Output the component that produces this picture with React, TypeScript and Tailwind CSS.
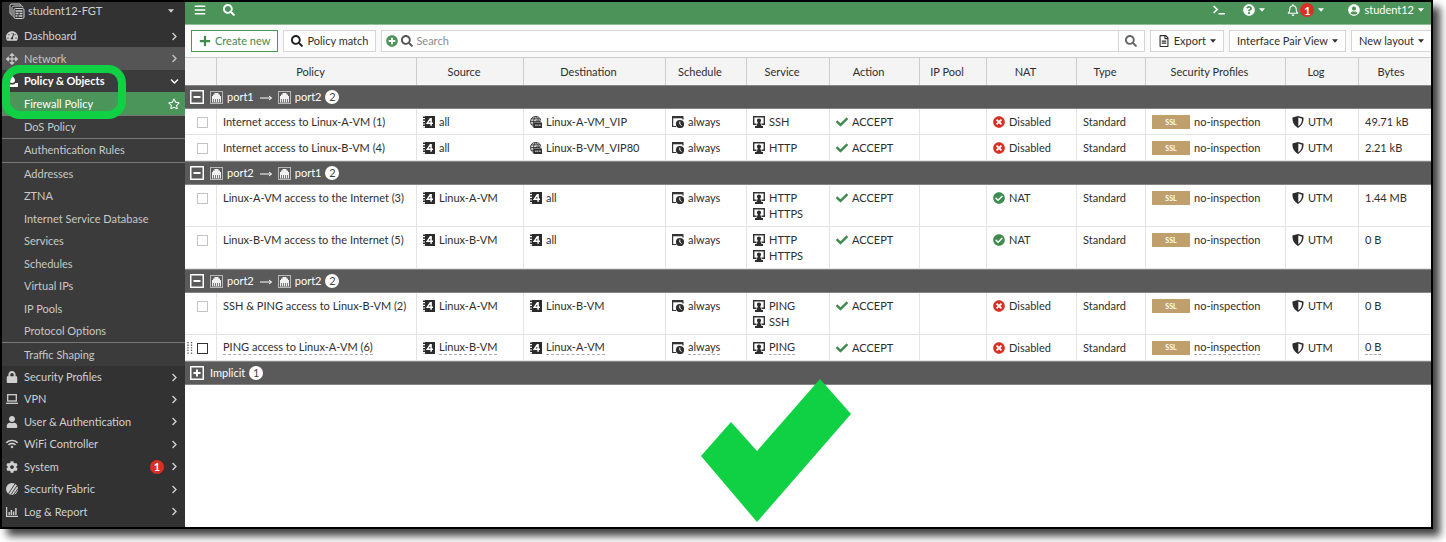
import { useState, type ReactNode } from "react";
import {
  FaArrowsAlt,
  FaBars,
  FaCheck,
  FaCheckCircle,
  FaChevronDown,
  FaChevronRight,
  FaCog,
  FaLock,
  FaPlus,
  FaPlusCircle,
  FaQuestionCircle,
  FaRegBell,
  FaRegFileAlt,
  FaRegStar,
  FaSearch,
  FaTachometerAlt,
  FaTimesCircle,
  FaUser,
  FaUserCircle,
  FaWifi,
} from "react-icons/fa";

const svgBase = "h-3 w-3 shrink-0";

function Caret() {
  return (
    <svg viewBox="0 0 6 4" className="h-1 w-[6px] shrink-0" fill="currentColor">
      <path d="M0 .3h6L3 3.700z" />
    </svg>
  );
}

function DeviceIcon() {
  return (
    <svg viewBox="0 0 16 16" className="h-4 w-4 shrink-0" fill="none" stroke="currentColor" strokeWidth="1">
      <path d="M2.500 11.500l-1.500-1V2.200L2.200 1H11l1 1.500" />
      <path d="M4 13.500l-1-1V4.500L4.500 3H13l1 1.500" />
      <rect x="5" y="5.500" width="10" height="10" rx="1.500" />
      <path d="M6.500 8h7M6.500 10.500h3M10.500 10.500h3M6.500 13h2M9.500 13h4" strokeWidth="1.400" />
    </svg>
  );
}

function PolicyIcon() {
  return (
    <svg viewBox="0 0 12 12" className={svgBase} fill="currentColor">
      <path d="M6 0c.5 2 3 3 3 5.200C9 7 7.800 8 6 8S3 7 3 5.200C3 4 4 3.600 4.200 2.500 5 2.600 6 1.500 6 0z" />
      <path d="M0 8h2.500C3.300 9 4.600 9.500 6 9.500S8.700 9 9.500 8H12v4H0z" />
    </svg>
  );
}

function LaptopIcon() {
  return (
    <svg viewBox="0 0 12 12" className={svgBase} fill="none" stroke="currentColor" strokeWidth="1.300">
      <rect x="1.700" y="1.700" width="8.600" height="6.300" />
      <path d="M0 10.300h12" />
    </svg>
  );
}

function FabricIcon() {
  return (
    <svg viewBox="0 0 12 12" className={svgBase}>
      <circle cx="6" cy="6" r="6" fill="currentColor" />
      <path d="M2.300 11L9 .8M4.700 12L11 2.700M7.500 12L12 5.500" stroke="#323232" strokeWidth=".9" />
    </svg>
  );
}

function ReportIcon() {
  return (
    <svg viewBox="0 0 12 12" className={svgBase} fill="none" stroke="currentColor" strokeWidth="1.200">
      <path d="M.6 1v9.400H12" />
      <path d="M3.200 9V6M5.400 9V4M7.600 9V5.500M9.900 9V2" strokeWidth="1.400" />
    </svg>
  );
}

function PortIcon() {
  return (
    <svg viewBox="0 0 13 13" className="h-[13px] w-[13px] shrink-0">
      <rect x=".5" y=".5" width="12" height="12" fill="none" stroke="#b8b8b8" />
      <path d="M2 5h1V3.500h1.500V2h4v1.500H10V5h1v6.500H2z" fill="#f0f0f0" />
      <path d="M3.500 8v3.500M5.500 8v3.500M7.500 8v3.500M9.500 8v3.500" stroke="#5b5b5b" strokeWidth=".8" />
    </svg>
  );
}

function AddressIcon() {
  return (
    <svg viewBox="0 0 12 12" className={svgBase}>
      <path d="M2 0h10v12H2z" fill="#2b2b2b" />
      <path d="M1 .5v11" stroke="#2b2b2b" strokeWidth="2" strokeDasharray="1.500 1.200" />
      <path d="M8.100 9.800V2.800H7.300L4.300 7.200H10" fill="none" stroke="#fff" strokeWidth="1.500" />
    </svg>
  );
}

function VipIcon() {
  return (
    <svg viewBox="0 0 12 12" className={svgBase} fill="none" stroke="#3a3a3a" strokeWidth=".9">
      <circle cx="5.700" cy="5.500" r="5.300" fill="#d5d5d5" stroke="none" />
      <path d="M4.500 10.700A5.200 5.200 0 1 1 10.800 4.500M.5 5.500h9M1.200 2.800h9M1 8.300h2M5.500.500C3.500 2.500 3 6 4 10.500M5.500.500c2 1 2.700 2.500 3 4" />
      <rect x="3.500" y="6.500" width="8.500" height="5.500" fill="#2f2f2f" stroke="none" />
      <path d="M6 6.500V5h4v1.500" strokeWidth="1" />
      <path d="M5.300 9.300h1.200M7.300 9.300h1M9.300 9.300h1.200" stroke="#ddd" strokeWidth="1.500" />
    </svg>
  );
}

function ScheduleIcon() {
  return (
    <svg viewBox="0 0 12 12" className={svgBase}>
      <path d="M0 0h11.500v2.300H0z" fill="#333" />
      <path d="M.6 2v8.500H4M11 2v1.500" fill="none" stroke="#333" strokeWidth="1.200" />
      <circle cx="8" cy="8" r="4.100" fill="#2d2d2d" />
      <path d="M7.800 5.500v2.700l1.700 1.300" fill="none" stroke="#fff" strokeWidth="1" />
    </svg>
  );
}

function ServiceIcon() {
  return (
    <svg viewBox="0 0 12 12" className={svgBase}>
      <path d="M3.500 8.300H.700V.700h10.600v7.600H8.500" fill="none" stroke="#333" strokeWidth="1.400" />
      <path d="M6 2.500c1.300 0 2 .8 2 2 0 .9-.4 1.500-.8 1.900L8.500 10H10v2H2v-2h1.500l1.300-3.600C4.400 6 4 5.400 4 4.500c0-1.200.7-2 2-2z" fill="#2d2d2d" />
    </svg>
  );
}

function ShieldIcon() {
  return (
    <svg viewBox="0 0 12 12" className={svgBase}>
      <path d="M6 0l5.500 1.600C11.800 6.500 9.700 10 6 12 2.300 10 .2 6.500.5 1.600z" fill="#2b2b2b" />
      <path d="M6.300 1.600l3.700 1.100C10.100 6 8.700 8.700 6.300 10.300z" fill="#fff" />
    </svg>
  );
}

function TerminalIcon() {
  return (
    <svg viewBox="0 0 12 12" className={svgBase} fill="none" stroke="currentColor" strokeWidth="1.600">
      <path d="M.6 2l3.600 3.500L.6 9M5.500 9.800H12" />
    </svg>
  );
}

function ToggleBox({ open }: { open: boolean }) {
  return (
    <svg viewBox="0 0 14 14" className="h-[14px] w-[14px] shrink-0" fill="none" stroke="#fff">
      <rect x=".75" y=".75" width="12.500" height="12.500" strokeWidth="1.500" />
      <path d={open ? "M3.500 7h7" : "M3.500 7h7M7 3.500v7"} strokeWidth="2" />
    </svg>
  );
}

function ArrowIcon() {
  return (
    <svg viewBox="0 0 16 12" className="h-3 w-4 shrink-0" fill="none" stroke="currentColor">
      <path d="M2 7h11.500M11 5l2.500 2L11 9" />
    </svg>
  );
}

function DragHandle() {
  return (
    <svg viewBox="0 0 6 12" className="absolute left-[2px] top-[7px] h-3 w-[6px]" stroke="#555" strokeWidth="1.300">
      <path d="M1 0v12M4.500 0v12" strokeDasharray="1.300 1.300" />
    </svg>
  );
}

type Item = { label: string; icon?: ReactNode; kind?: "top" | "hover" | "open" | "active" | "sub"; line?: boolean; badge?: string };

const ic = "h-3 w-3 shrink-0";
const nav: Item[] = [
  { label: "Dashboard", icon: <FaTachometerAlt className={ic} />, kind: "top" },
  { label: "Network", icon: <FaArrowsAlt className={ic} />, kind: "hover" },
  { label: "Policy & Objects", icon: <PolicyIcon />, kind: "open" },
  { label: "Firewall Policy", kind: "active", line: true },
  { label: "DoS Policy", kind: "sub", line: true },
  { label: "Authentication Rules", kind: "sub", line: true },
  { label: "Addresses", kind: "sub" },
  { label: "ZTNA", kind: "sub" },
  { label: "Internet Service Database", kind: "sub" },
  { label: "Services", kind: "sub" },
  { label: "Schedules", kind: "sub" },
  { label: "Virtual IPs", kind: "sub" },
  { label: "IP Pools", kind: "sub" },
  { label: "Protocol Options", kind: "sub", line: true },
  { label: "Traffic Shaping", kind: "sub" },
  { label: "Security Profiles", icon: <FaLock className={ic} />, kind: "top" },
  { label: "VPN", icon: <LaptopIcon />, kind: "top" },
  { label: "User & Authentication", icon: <FaUser className={ic} />, kind: "top" },
  { label: "WiFi Controller", icon: <FaWifi className={ic} />, kind: "top" },
  { label: "System", icon: <FaCog className={ic} />, kind: "top", badge: "1" },
  { label: "Security Fabric", icon: <FabricIcon />, kind: "top" },
  { label: "Log & Report", icon: <ReportIcon />, kind: "top" },
];

const navStyles = {
  top: "bg-[#323232] text-[#d0d0d0]",
  hover: "bg-[#555555] text-[#c4c4c4]",
  open: "bg-[#3b3b3b] font-bold text-white",
  active: "bg-[#4b955a] text-white",
  sub: "bg-[#3b3b3b] text-[#c8c8c8]",
};

function NavItem({ item }: { item: Item }) {
  const kind = item.kind ?? "top";
  const sub = kind === "sub" || kind === "active";
  return (
    <li className={item.line ? "flex flex-1 border-b border-[#777777]" : "flex flex-1"}>
      <a href="#" className={"flex min-h-[22px] flex-1 items-center gap-[6px] pl-1 pr-[5px] " + navStyles[kind]}>
        <span className="flex w-3 justify-center">{item.icon}</span>
        <span className="flex-1 whitespace-nowrap">{item.label}</span>
        {item.badge && <Badge>{item.badge}</Badge>}
        {kind === "active" && <FaRegStar className="h-3 w-3" />}
        {kind === "open" && <FaChevronDown className="mr-px h-[9px] w-[9px]" />}
        {!sub && kind !== "open" && <FaChevronRight className="mr-px h-[9px] w-[9px]" />}
      </a>
    </li>
  );
}

function Badge({ children }: { children: ReactNode }) {
  return (
    <span className="flex h-[14px] w-[14px] items-center justify-center rounded-full bg-[#d93025] text-[11px] font-bold leading-none text-white">
      {children}
    </span>
  );
}

type Policy = {
  name: string;
  src: string;
  dst: string;
  vip?: boolean;
  services: string[];
  nat: boolean;
  bytes: string;
  hovered?: boolean;
};
type Group = { from: string; to: string; rows: Policy[] };

const groups: Group[] = [
  {
    from: "port1",
    to: "port2",
    rows: [
      { name: "Internet access to Linux-A-VM (1)", src: "all", dst: "Linux-A-VM_VIP", vip: true, services: ["SSH"], nat: false, bytes: "49.71 kB" },
      { name: "Internet access to Linux-B-VM (4)", src: "all", dst: "Linux-B-VM_VIP80", vip: true, services: ["HTTP"], nat: false, bytes: "2.21 kB" },
    ],
  },
  {
    from: "port2",
    to: "port1",
    rows: [
      { name: "Linux-A-VM access to the Internet (3)", src: "Linux-A-VM", dst: "all", services: ["HTTP", "HTTPS"], nat: true, bytes: "1.44 MB" },
      { name: "Linux-B-VM access to the Internet (5)", src: "Linux-B-VM", dst: "all", services: ["HTTP", "HTTPS"], nat: true, bytes: "0 B" },
    ],
  },
  {
    from: "port2",
    to: "port2",
    rows: [
      { name: "SSH & PING access to Linux-B-VM (2)", src: "Linux-A-VM", dst: "Linux-B-VM", services: ["PING", "SSH"], nat: false, bytes: "0 B" },
      { name: "PING access to Linux-A-VM (6)", src: "Linux-B-VM", dst: "Linux-A-VM", services: ["PING"], nat: false, bytes: "0 B", hovered: true },
    ],
  },
];

function Cell({ icon, children, dotted }: { icon?: ReactNode; children: ReactNode; dotted?: boolean }) {
  return (
    <div className="flex items-center gap-1 whitespace-nowrap leading-4">
      {icon}
      <span className={dotted ? "border-b border-dashed border-[#aaaaaa] leading-[14px]" : ""}>{children}</span>
    </div>
  );
}

const td = "border-b border-r border-[#e4e4e4] pb-[4px] pl-[6px] pt-[5px] align-top";

function PolicyRow({ p }: { p: Policy }) {
  const [checked, setChecked] = useState(false);
  const d = p.hovered;
  return (
    <tr className="bg-white">
      <td className="relative border-b border-r border-[#e4e4e4] pl-3 pt-2 align-top">
        {d && <DragHandle />}
        <input
          type="checkbox"
          aria-label={p.name}
          checked={checked}
          onChange={(e) => setChecked(e.target.checked)}
          className={
            "block h-[11px] w-[11px] appearance-none border bg-white checked:bg-[#4b955a] " +
            (d ? "border-[#333333]" : "border-[#c4c4c4]")
          }
        />
      </td>
      <td className={td}><Cell dotted={d}>{p.name}</Cell></td>
      <td className={td}><Cell dotted={d} icon={<AddressIcon />}>{p.src}</Cell></td>
      <td className={td}><Cell dotted={d} icon={p.vip ? <VipIcon /> : <AddressIcon />}>{p.dst}</Cell></td>
      <td className={td}><Cell dotted={d} icon={<ScheduleIcon />}>always</Cell></td>
      <td className={td}>
        {p.services.map((s) => (
          <Cell key={s} dotted={d} icon={<ServiceIcon />}>{s}</Cell>
        ))}
      </td>
      <td className={td}><Cell icon={<FaCheck className="h-3 w-3 text-[#3d8c4d]" />}>ACCEPT</Cell></td>
      <td className={td} />
      <td className={td}>
        <Cell icon={p.nat ? <FaCheckCircle className="h-3 w-3 text-[#3d8c4d]" /> : <FaTimesCircle className="h-3 w-3 text-[#d93025]" />}>
          {p.nat ? "NAT" : "Disabled"}
        </Cell>
      </td>
      <td className={td}><Cell>Standard</Cell></td>
      <td className={td}>
        <Cell
          dotted={d}
          icon={
            <span className="flex h-[14px] w-[38px] items-center justify-center bg-[#bf9f6b] text-[7px] font-bold leading-none text-white">
              SSL
            </span>
          }
        >
          no-inspection
        </Cell>
      </td>
      <td className={td}><Cell icon={<ShieldIcon />}>UTM</Cell></td>
      <td className={td + " border-r-0"}><Cell dotted={d}>{p.bytes}</Cell></td>
    </tr>
  );
}

function GroupRow({ open, count, children }: { open: boolean; count: number; children: ReactNode }) {
  return (
    <tr className="bg-[#5a5a5a] text-white">
      <td colSpan={13} className="h-6 border-y border-[#858585] p-0 pl-[5px]">
        <div className="flex items-center gap-[6px]">
          <button type="button" aria-label={open ? "Collapse" : "Expand"} className="flex">
            <ToggleBox open={open} />
          </button>
          <div className="flex items-center gap-1">
            {children}
            <span className="flex h-[14px] w-[14px] items-center justify-center rounded-full bg-white leading-[14px] text-[#444444]">
              {count}
            </span>
          </div>
        </div>
      </td>
    </tr>
  );
}

const columns = ["Policy", "Source", "Destination", "Schedule", "Service", "Action", "IP Pool", "NAT", "Type", "Security Profiles", "Log", "Bytes"];

function PolicyTable() {
  return (
    <table className="w-full table-fixed border-separate border-spacing-0">
      <colgroup>
        <col className="w-[32px]" />
        <col className="w-[200px]" />
        <col className="w-[107px]" />
        <col className="w-[142px]" />
        <col className="w-[81px]" />
        <col className="w-[83px]" />
        <col className="w-[90px]" />
        <col className="w-[67px]" />
        <col className="w-[90px]" />
        <col className="w-[69px]" />
        <col className="w-[140px]" />
        <col className="w-[73px]" />
        <col className="w-[72px]" />
      </colgroup>
      <thead>
        <tr className="bg-[#f4f4f4]">
          <td className="h-[28px] border-r border-t border-[#cccccc]" />
          {columns.map((c) => (
            <th key={c} scope="col" className="border-r border-t border-[#cccccc] p-0 pr-3 font-normal last:border-r-0 last:pr-2">
              {c}
            </th>
          ))}
        </tr>
      </thead>
      {groups.map((g, i) => (
        <tbody key={i}>
          <GroupRow open count={g.rows.length}>
            <PortIcon />
            <span>{g.from}</span>
            <ArrowIcon />
            <PortIcon />
            <span>{g.to}</span>
          </GroupRow>
          {g.rows.map((p) => (
            <PolicyRow key={p.name} p={p} />
          ))}
        </tbody>
      ))}
      <tbody>
        <GroupRow open={false} count={1}>
          <span>Implicit</span>
        </GroupRow>
      </tbody>
    </table>
  );
}

const btn = "flex h-[22px] shrink-0 items-center whitespace-nowrap border border-[#d6d6d6] bg-white";

export default function App() {
  return (
    <div className="flex min-h-screen bg-white pb-[13px] pr-[13px] font-['Lato',sans-serif] text-[11px] leading-4 text-[#2e2e2e]">
      <div className="relative flex flex-1 border-2 border-black bg-white shadow-[7px_7px_8px_0px_rgba(0,0,0,0.75)]">
        <aside className="flex w-[183px] shrink-0 flex-col bg-[#323232]">
          <button type="button" className="flex h-[23px] items-center gap-[2px] pb-[6px] pl-[7px] pr-[11px] text-[#d0d0d0]">
            <DeviceIcon />
            <span className="flex-1 pl-px text-left">student12-FGT</span>
            <Caret />
          </button>
          <ul className="flex flex-1 flex-col pb-1">
            {nav.map((n) => (
              <NavItem key={n.label} item={n} />
            ))}
          </ul>
        </aside>
        <div className="absolute left-0 top-[63px] h-[54px] w-[124px] rounded-[18px] border-8 border-[#10d044]" />
        <main className="flex min-w-0 flex-1 flex-col">
          <header className="flex h-[23px] items-center border-b border-[#8fbf99] bg-[#4b9359] pb-[6px] pl-[9px] pr-[7px] text-white">
            <button type="button" aria-label="Menu"><FaBars className="h-3 w-3" /></button>
            <button type="button" aria-label="Search" className="ml-[17px]"><FaSearch className="h-3 w-3" /></button>
            <div className="ml-auto flex items-center">
              <button type="button" aria-label="Console" className="mr-[18px]"><TerminalIcon /></button>
              <button type="button" aria-label="Help" className="mr-[22px] flex items-center gap-1">
                <FaQuestionCircle className="h-3 w-3" />
                <Caret />
              </button>
              <button type="button" aria-label="Notifications" className="mr-6 flex items-center gap-px">
                <FaRegBell className="h-3 w-3" />
                <Badge>1</Badge>
                <span className="w-[2px]" />
                <Caret />
              </button>
              <button type="button" className="flex items-center gap-1">
                <FaUserCircle className="h-3 w-3" />
                student12
                <Caret />
              </button>
            </div>
          </header>
          <div className="flex h-8 items-center gap-[5px] bg-[#fafafa] pl-[6px]">
            <button type="button" className="flex h-[22px] shrink-0 items-center gap-1 whitespace-nowrap border border-[#4b955a] bg-white px-[7px] text-[#3d8c4d]">
              <FaPlus className="h-3 w-3" />
              Create new
            </button>
            <button type="button" className={btn + " gap-1 px-[7px]"}>
              <FaSearch className="h-3 w-3 text-[#222222]" />
              Policy match
            </button>
            <label className={btn + " min-w-0 flex-1 shrink gap-[3px] pl-1"}>
              <FaPlusCircle className="h-3 w-3 text-[#4b955a]" />
              <FaSearch className="h-3 w-3 text-[#555555]" />
              <input type="text" aria-label="Search policies" placeholder="Search" className="min-w-0 flex-1 outline-none placeholder:text-[#8c8c8c]" />
              <button type="button" aria-label="Run search" className="flex h-full w-[26px] items-center justify-center border-l border-[#d6d6d6] text-[#666666]">
                <FaSearch className="h-3 w-3" />
              </button>
            </label>
            <button type="button" className={btn + " gap-1 px-[7px]"}>
              <FaRegFileAlt className="h-3 w-3" />
              Export
              <Caret />
            </button>
            <button type="button" className={btn + " gap-1 px-[7px]"}>
              Interface Pair View
              <Caret />
            </button>
            <button type="button" className={btn + " gap-1 border-r-0 px-[7px]"}>
              New layout
              <Caret />
            </button>
          </div>
          <PolicyTable />
        </main>
        <svg viewBox="0 0 152 144" className="absolute left-[698px] top-[377px] h-[144px] w-[152px]">
          <path d="M1 77L31 43L57 72L120 0L151 35L57 143z" fill="#10d044" />
        </svg>
      </div>
    </div>
  );
}
